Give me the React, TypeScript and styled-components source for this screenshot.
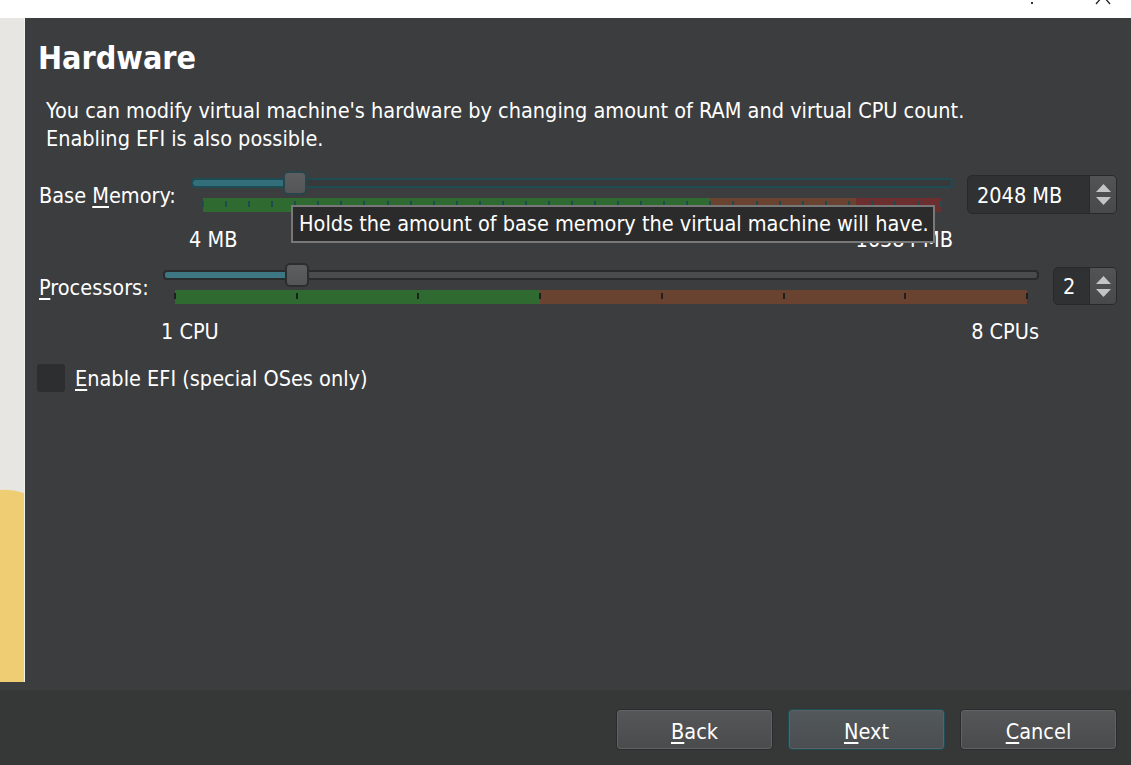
import React from "react";
import styled, { createGlobalStyle } from "styled-components";

const FONT = `"DejaVu Sans Condensed", "DejaVu Sans", "Liberation Sans", sans-serif`;
const TEXT = "21.5px";

const Global = createGlobalStyle`
  html, body { margin: 0; padding: 0; background: #3c3d3f; }
  body { font-family: ${FONT}; color: #ffffff; }
  #root { width: 1131px; height: 765px; overflow: hidden; }
`;

const Window = styled.div`
  width: 1131px;
  height: 765px;
  display: flex;
  flex-direction: column;
  background: #3c3d3f;
`;

const TopBar = styled.div`
  height: 18px;
  flex-shrink: 0;
  background: #ffffff;
  display: flex;
  justify-content: flex-end;
`;

const TopMarks = styled.svg`
  width: 100px;
  height: 18px;
  display: block;
`;

const Main = styled.div`
  flex: 1;
  min-height: 0;
  display: flex;
  padding-bottom: 8px;
`;

const Art = styled.svg`
  width: 25px;
  height: 664px;
  flex-shrink: 0;
  display: block;
`;

const Content = styled.div`
  flex: 1;
  display: flex;
  flex-direction: column;
  padding: 21px 14px 0 13px;
`;

const Title = styled.h1`
  margin: 0;
  font-size: 32px;
  line-height: 38px;
  font-weight: bold;
`;

const Description = styled.p`
  margin: 20px 0 0;
  padding-left: 8px;
  font-size: ${TEXT};
  line-height: 28px;
`;

const SliderRow = styled.div<{ $gap: number }>`
  display: flex;
  align-items: flex-start;
  margin-top: ${(p) => p.$gap}px;
`;

const RowLabel = styled.div<{ $w: number }>`
  width: ${(p) => p.$w}px;
  flex-shrink: 0;
  box-sizing: border-box;
  padding-left: 1px;
  margin-top: 11px;
  font-size: ${TEXT};
  line-height: 28px;
  white-space: nowrap;
`;

const Mn = styled.span`
  text-decoration: underline;
  text-underline-offset: 3px;
`;

const SliderBox = styled.div`
  flex: 1;
  min-width: 0;
  position: relative;
  display: flex;
  flex-direction: column;
`;

const GrooveArea = styled.div`
  height: 24px;
  position: relative;
`;

const Groove = styled.div<{ $focused: boolean }>`
  margin-top: 7px;
  height: 10px;
  box-sizing: border-box;
  border: 2px solid ${(p) => (p.$focused ? "#1d4c55" : "#2a2b2d")};
  border-radius: 4px;
  background: ${(p) => (p.$focused ? "#37393b" : "#4a4b4d")};
  overflow: hidden;
  display: flex;
`;

const GrooveFill = styled.div<{ $focused: boolean }>`
  height: 100%;
  background: ${(p) => (p.$focused ? "#326f7a" : "#3c7783")};
  border-radius: 2px;
`;

const Handle = styled.div<{ $focused: boolean }>`
  position: absolute;
  top: 0;
  width: 24px;
  height: 24px;
  box-sizing: border-box;
  border-radius: 5px;
  border: 2px solid ${(p) => (p.$focused ? "#29444a" : "#2c2d2f")};
  background: linear-gradient(#5d5e60, #545557);
`;

const ColorBar = styled.div`
  margin: 3px 12px 0;
  height: 14px;
  position: relative;
  display: flex;
`;

const Segment = styled.div<{ $color: string }>`
  height: 100%;
  background: ${(p) => p.$color};
`;

const Tick = styled.div<{ $color: string }>`
  position: absolute;
  top: 3px;
  width: 2px;
  height: 6px;
  margin-left: -1px;
  background: ${(p) => p.$color};
`;

const Limits = styled.div`
  display: flex;
  justify-content: space-between;
  margin: 14px 0 0 -2px;
  font-size: ${TEXT};
  line-height: 28px;
`;

const Tooltip = styled.div`
  position: absolute;
  left: 100px;
  top: 34px;
  z-index: 2;
  width: 644px;
  height: 38px;
  box-sizing: border-box;
  border: 2px solid #787878;
  background: #2b2b2c;
  padding-left: 6px;
  font-size: ${TEXT};
  line-height: 34px;
  white-space: nowrap;
`;

const Spin = styled.div<{ $w: number; $h: number }>`
  width: ${(p) => p.$w}px;
  height: ${(p) => p.$h}px;
  margin: 4px 0 0 14px;
  flex-shrink: 0;
  box-sizing: border-box;
  display: flex;
  border: 1px solid #28292b;
  border-radius: 5px;
  background: #2f3133;
  overflow: hidden;
`;

const SpinText = styled.div`
  flex: 1;
  display: flex;
  align-items: center;
  padding: 1px 0 0 9px;
  font-size: ${TEXT};
`;

const SpinButtons = styled.div`
  width: 26px;
  display: flex;
  flex-direction: column;
  background: linear-gradient(#525355, #48494b);
  border-left: 1px solid #2a2b2d;
`;

const SpinHalf = styled.div<{ $up: boolean }>`
  flex: 1;
  display: flex;
  justify-content: center;
  align-items: ${(p) => (p.$up ? "flex-end" : "flex-start")};
  padding: ${(p) => (p.$up ? "0 0 2px" : "3px 0 0")};
`;

const Arrow = styled.svg`
  width: 15px;
  height: 8px;
  display: block;
`;

const CheckRow = styled.label`
  display: flex;
  align-items: center;
  gap: 10px;
  margin: 17px 0 0 -1px;
  font-size: ${TEXT};
  line-height: 28px;
`;

const CheckLabel = styled.span`
  padding-top: 2px;
`;

const CheckBox = styled.span`
  width: 28px;
  height: 28px;
  border-radius: 3px;
  background: #2d2e30;
  flex-shrink: 0;
`;

const Footer = styled.div`
  height: 75px;
  flex-shrink: 0;
  background: #363837;
  display: flex;
  justify-content: flex-end;
  align-items: flex-start;
  gap: 15px;
  padding: 19px 14px 0 0;
  box-sizing: border-box;
`;

const Button = styled.button<{ $primary?: boolean }>`
  width: 157px;
  height: 41px;
  box-sizing: border-box;
  border: 1px solid ${(p) => (p.$primary ? "#1f4d56" : "#2a2b2d")};
  border-radius: 4px;
  box-shadow: inset 0 0 0 1px ${(p) => (p.$primary ? "#5b6264" : "#616264")};
  background: ${(p) =>
    p.$primary ? "linear-gradient(#53585a, #4a4e50)" : "linear-gradient(#555658, #4a4b4d)"};
  color: #ffffff;
  font-family: ${FONT};
  font-size: ${TEXT};
  padding: 3px 0 0;
`;

type Seg = { frac: number; color: string };

function Slider(props: {
  frac: number;
  focused: boolean;
  segments: Seg[];
  ticks: number;
  tickColor: string;
  min: string;
  max: string;
  children?: React.ReactNode;
}) {
  const { frac, focused, segments, ticks, tickColor, min, max, children } = props;
  const handleLeft = `calc(${frac} * (100% - 24px))`;
  const fillWidth = `calc(${frac} * (100% - 24px) + 12px)`;
  return (
    <SliderBox>
      <GrooveArea>
        <Groove $focused={focused}>
          <GrooveFill $focused={focused} style={{ width: fillWidth }} />
        </Groove>
        <Handle $focused={focused} style={{ left: handleLeft }} />
      </GrooveArea>
      <ColorBar>
        {segments.map((s, i) => (
          <Segment key={i} $color={s.color} style={{ flex: s.frac }} />
        ))}
        {Array.from({ length: ticks + 1 }, (_, i) => (
          <Tick key={i} $color={tickColor} style={{ left: `${(i / ticks) * 100}%` }} />
        ))}
      </ColorBar>
      <Limits>
        <span>{min}</span>
        <span>{max}</span>
      </Limits>
      {children}
    </SliderBox>
  );
}

function SpinBox(props: { value: string; w: number; h: number }) {
  return (
    <Spin $w={props.w} $h={props.h}>
      <SpinText>{props.value}</SpinText>
      <SpinButtons>
        <SpinHalf $up>
          <Arrow viewBox="0 0 15 8">
            <path d="M7.5 0 L15 8 L0 8 Z" fill="#c4c4c4" />
          </Arrow>
        </SpinHalf>
        <SpinHalf $up={false}>
          <Arrow viewBox="0 0 15 8">
            <path d="M0 0 L15 0 L7.5 8 Z" fill="#c4c4c4" />
          </Arrow>
        </SpinHalf>
      </SpinButtons>
    </Spin>
  );
}

export default function App() {
  return (
    <>
      <Global />
      <Window>
        <TopBar>
          <TopMarks viewBox="0 0 100 18">
            <rect x="0" y="2" width="2" height="2" fill="#333" />
            <path d="M71 -3 L65 4 M73 -3 L79 4" stroke="#222" strokeWidth="1.3" fill="none" />
          </TopMarks>
        </TopBar>
        <Main>
          <Art viewBox="0 0 25 664" preserveAspectRatio="none">
            <rect x="0" y="0" width="25" height="664" fill="#e8e6e2" />
            <path d="M0 472 Q12 471 24 475 L24 664 L0 664 Z" fill="#efcd72" />
            <rect x="24" y="0" width="1" height="664" fill="#f3f1ec" />
          </Art>
          <Content>
            <Title>Hardware</Title>
            <Description>
              You can modify virtual machine's hardware by changing amount of RAM and virtual CPU count.
              <br />
              Enabling EFI is also possible.
            </Description>
            <SliderRow $gap={18}>
              <RowLabel $w={153}>
                Base <Mn>M</Mn>emory:
              </RowLabel>
              <Slider
                frac={2044 / 16380}
                focused
                segments={[
                  { frac: 0.687, color: "#2f6a31" },
                  { frac: 0.198, color: "#6a4230" },
                  { frac: 0.115, color: "#6d2e2f" },
                ]}
                ticks={32}
                tickColor="#1f4a52"
                min="4 MB"
                max="16384 MB"
              >
                <Tooltip>Holds the amount of base memory the virtual machine will have.</Tooltip>
              </Slider>
              <SpinBox value="2048 MB" w={150} h={39} />
            </SliderRow>
            <SliderRow $gap={9}>
              <RowLabel $w={125}>
                <Mn>P</Mn>rocessors:
              </RowLabel>
              <Slider
                frac={1 / 7}
                focused={false}
                segments={[
                  { frac: 3, color: "#2f6a31" },
                  { frac: 4, color: "#6a4230" },
                ]}
                ticks={7}
                tickColor="#1e1f20"
                min="1 CPU"
                max="8 CPUs"
              />
              <SpinBox value="2" w={64} h={38} />
            </SliderRow>
            <CheckRow>
              <CheckBox />
              <CheckLabel>
                <Mn>E</Mn>nable EFI (special OSes only)
              </CheckLabel>
            </CheckRow>
          </Content>
        </Main>
        <Footer>
          <Button>
            <Mn>B</Mn>ack
          </Button>
          <Button $primary>
            <Mn>N</Mn>ext
          </Button>
          <Button>
            <Mn>C</Mn>ancel
          </Button>
        </Footer>
      </Window>
    </>
  );
}
